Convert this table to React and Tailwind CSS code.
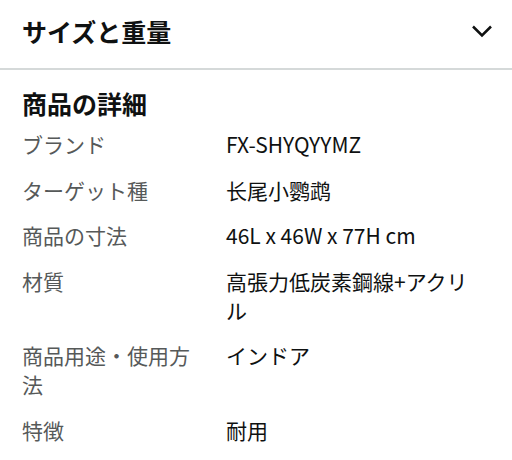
import React from 'react';

const details = [
  { label: 'ブランド', value: 'FX-SHYQYYMZ' },
  { label: 'ターゲット種', value: '长尾小鹦鹉' },
  { label: '商品の寸法', value: '46L x 46W x 77H cm' },
  { label: '材質', value: '高張力低炭素鋼線+アクリル' },
  { label: '商品用途・使用方法', value: 'インドア' },
  { label: '特徴', value: '耐用' },
];

function App() {
  return (
    <div className="w-[512px] h-[460px] overflow-hidden bg-white font-['Noto_Sans_CJK_JP',sans-serif] text-[#0f1111]">
      {/* collapsed section */}
      <div className="flex h-[68px] items-center justify-between pb-[6px] pl-[22px] pr-[19px]">
        <h2 className="text-[25px] font-bold leading-none">サイズと重量</h2>
        <svg width="22" height="14" viewBox="0 0 22 14" fill="none">
          <path d="M2 2.5l9 9 9-9" stroke="#0f1111" strokeWidth="2.5" />
        </svg>
      </div>
      <div className="h-[2px] bg-[#d5d9d9]"></div>

      {/* product details */}
      <div className="px-[22px] pt-[15px]">
        <h2 className="text-[25px] font-bold leading-[36px]">商品の詳細</h2>
        <dl className="mt-[9px] grid grid-cols-[180px_250px] gap-x-[24px] gap-y-[16.5px] text-[21px] leading-[29px]">
          {details.map((d) => (
            <React.Fragment key={d.label}>
              <dt className="text-[#565959]">{d.label}</dt>
              <dd>{d.value}</dd>
            </React.Fragment>
          ))}
        </dl>
      </div>
    </div>
  );
}

export default App;
